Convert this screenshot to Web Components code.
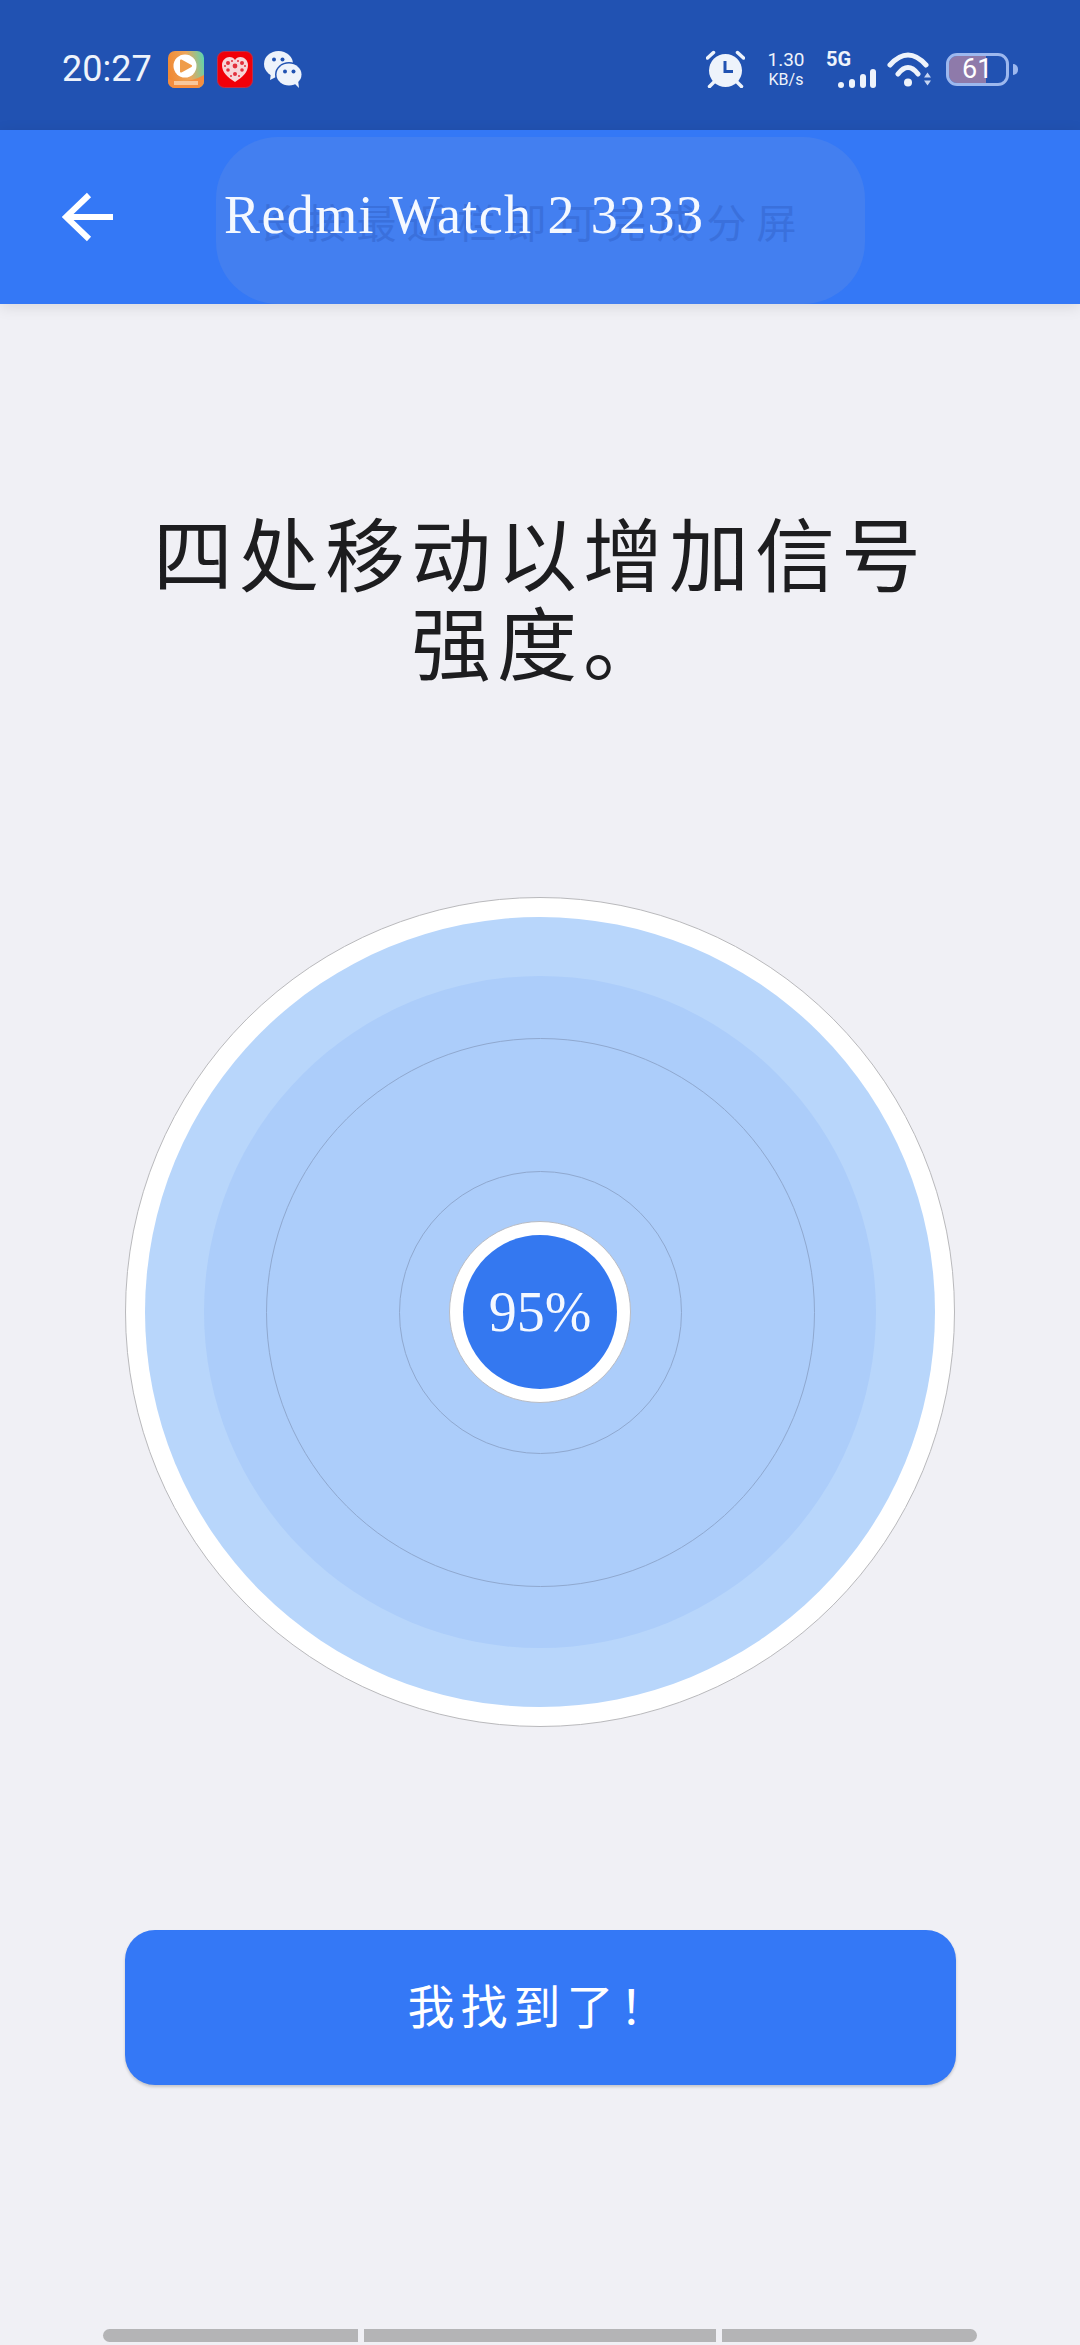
<!DOCTYPE html>
<html lang="zh">
<head>
<meta charset="utf-8">
<title>Redmi Watch 2 3233</title>
<style>
  html, body { margin: 0; height: 100%; }
  body {
    background: #f0f0f5;
    font-family: "Liberation Serif", "Noto Sans CJK SC", serif;
    display: flex;
    flex-direction: column;
    height: 2345px;
    overflow: hidden;
  }
</style>
</head>
<body>
  <status-bar></status-bar>
  <app-bar hint="长按最近栏即可完成分屏">Redmi Watch 2 3233</app-bar>
  <find-prompt>四处移动以增加信号强度。</find-prompt>
  <signal-radar value="95%"></signal-radar>
  <action-button>我找到了！</action-button>
  <nav-hint></nav-hint>

<script>
const html = (strings) => {
  const template = document.createElement('template');
  template.innerHTML = strings.join('');
  return template;
};

const statusBarTemplate = html`
<style>
  :host {
    display: flex;
    justify-content: space-between;
    align-items: center;
    box-sizing: border-box;
    height: 130px;
    padding: 8px 62px 0 62px;
    background: #2152b2;
    color: #eef3fb;
    font-family: Roboto, sans-serif;
  }
  .group { display: flex; align-items: center; }
  svg { display: block; }
  .time { font-size: 36px; width: 88px; line-height: 38px; white-space: nowrap; margin-right: 18px; }
  .app-a { margin-right: 13px; }
  .app-b { margin-right: 11px; }
  .alarm { margin-right: 22px; }
  .speed { width: 38px; margin-right: 21px; text-align: center; }
  .speed .rate { font-size: 19px; line-height: 22px; }
  .speed .unit { font-size: 16px; line-height: 18px; }
  .net { width: 50px; margin-right: 11px; }
  .net b { display: block; font-size: 20px; line-height: 19px; }
  .wifi { margin-right: 15px; }
  .battery { display: flex; align-items: center; gap: 4px; }
  .cell {
    box-sizing: border-box;
    width: 63px;
    height: 33px;
    border: 3px solid #9db8ee;
    border-radius: 11px;
    background: linear-gradient(90deg, #8e7aaa 65%, transparent 65%);
    background-clip: padding-box;
    font-size: 27px;
    line-height: 27px;
    padding-left: 13px;
    color: #fff;
  }
  .nub { width: 5px; height: 11px; background: #9db8ee; border-radius: 0 5px 5px 0; }
</style>
<div class="group">
  <span class="time">20:27</span>
  <svg class="app-a" width="36" height="37" viewBox="0 0 36 37">
    <defs>
      <linearGradient id="videoBg" x1="0" y1="0.4" x2="1" y2="0.2">
        <stop offset="0" stop-color="#f08a35"/>
        <stop offset="0.55" stop-color="#eda65a"/>
        <stop offset="1" stop-color="#5ed3ae"/>
      </linearGradient>
    </defs>
    <rect width="36" height="37" rx="7" fill="url(#videoBg)"/>
    <path d="M0 28Q18 34 36 24V30a7 7 0 0 1-7 7H7a7 7 0 0 1-7-7Z" fill="#f58d3f"/>
    <rect x="6" y="30" width="24" height="4" fill="#f9c79b"/>
    <circle cx="17" cy="15" r="11.5" fill="#fff"/>
    <path d="M13 9.5 23 15 13 20.5Z" fill="#ef9d4b" stroke="#ef9d4b" stroke-width="2" stroke-linejoin="round"/>
  </svg>
  <svg class="app-b" width="36" height="37" viewBox="0 0 36 37">
    <rect x="0.5" y="0.5" width="35" height="36" rx="7" fill="#f10009" stroke="#b8324f"/>
    <path d="M18 31C10 26 5 21 5 14C5 9 9 6 12.500 6C15 6 17 7 18 9C19 7 21 6 23.500 6C27 6 31 9 31 14C31 21 26 26 18 31Z" fill="#f7d6d8"/>
    <g fill="#e2303c">
      <circle cx="11" cy="12" r="2"/><circle cx="18" cy="15" r="2.400"/><circle cx="25" cy="12" r="2"/>
      <circle cx="11" cy="19" r="1.800"/><circle cx="25" cy="19" r="1.800"/><circle cx="18" cy="23" r="2"/>
      <circle cx="14" cy="25" r="1"/><circle cx="22" cy="25" r="1"/><circle cx="15" cy="10" r="1"/><circle cx="21" cy="10" r="1"/>
      <circle cx="8" cy="15" r="1"/><circle cx="28" cy="15" r="1"/>
    </g>
  </svg>
  <svg width="38" height="38" viewBox="0 0 38 38">
    <ellipse cx="14.500" cy="14" rx="14.500" ry="13" fill="#eef3fb"/>
    <path d="M7 23 6 30 14 26Z" fill="#eef3fb"/>
    <ellipse cx="25" cy="24.500" rx="14" ry="12.500" fill="#2152b2"/>
    <ellipse cx="25" cy="24.500" rx="12.500" ry="11" fill="#eef3fb"/>
    <path d="M30 33 35 38 34 30Z" fill="#eef3fb"/>
    <circle cx="10" cy="9.500" r="2" fill="#2152b2"/><circle cx="18.500" cy="9.500" r="2" fill="#2152b2"/>
    <circle cx="21" cy="21.500" r="2" fill="#2152b2"/><circle cx="29.500" cy="21.500" r="2" fill="#2152b2"/>
  </svg>
</div>
<div class="group">
  <svg class="alarm" width="39" height="38" viewBox="0 0 39 38">
    <circle cx="19.500" cy="20.500" r="16.500" fill="#eef3fb"/>
    <path d="M19 11V21.500H27" fill="none" stroke="#2152b2" stroke-width="3"/>
    <path d="M1.500 8 7.500 2.500M37.500 8 31.500 2.500M8 32 3.500 36.500M31 32 35.500 36.500" fill="none" stroke="#eef3fb" stroke-width="3.500" stroke-linecap="round"/>
  </svg>
  <div class="speed"><div class="rate">1.30</div><div class="unit">KB/s</div></div>
  <div class="net">
    <b>5G</b>
    <svg width="50" height="19" viewBox="0 0 50 19">
      <rect x="12" y="13" width="6" height="6" rx="3" fill="#eef3fb"/>
      <rect x="23" y="10" width="6" height="9" rx="3" fill="#eef3fb"/>
      <rect x="34" y="5" width="6" height="14" rx="3" fill="#eef3fb"/>
      <rect x="44" y="0" width="6" height="19" rx="3" fill="#eef3fb"/>
    </svg>
  </div>
  <svg class="wifi" width="44" height="35" viewBox="0 0 44 35">
    <path d="M3 13Q21 -7 39 13M11 22Q21 9 31 22" fill="none" stroke="#eef3fb" stroke-width="5" stroke-linecap="round"/>
    <circle cx="21" cy="30.500" r="4" fill="#eef3fb"/>
    <path d="M37 25.500 40.500 20.500 44 25.500ZM37 28.500 40.500 33.500 44 28.500Z" fill="#c6d5f2"/>
  </svg>
  <div class="battery"><div class="cell">61</div><div class="nub"></div></div>
</div>
`;

class StatusBar extends HTMLElement {
  constructor() {
    super();
    this.attachShadow({mode: 'open'});
    this.shadowRoot.appendChild(statusBarTemplate.content.cloneNode(true));
  }
}

const appBarTemplate = html`
<style>
  :host {
    display: flex;
    align-items: center;
    position: relative;
    z-index: 1;
    box-sizing: border-box;
    height: 174px;
    padding: 0 0 0 62px;
    background: #3478f6;
    color: #fff;
    box-shadow: 0 3px 14px rgba(0, 0, 0, .1);
  }
  svg { display: block; flex: none; }
  .title {
    position: relative;
    margin: 0 0 4px 110px;
    font-size: 54px;
    letter-spacing: 1.4px;
    white-space: nowrap;
    color: #f4f8ff;
  }
  .pill {
    position: absolute;
    left: 216px;
    right: 215px;
    top: 7px;
    bottom: 0;
    display: flex;
    align-items: center;
    justify-content: center;
    padding-right: 18px;
    border-radius: 62px;
    background: #437ff0;
    color: #3a70dc;
    font-family: "Noto Sans CJK SC", sans-serif;
    font-size: 40px;
    letter-spacing: 10px;
    white-space: nowrap;
  }
</style>
<div class="pill"></div>
<svg width="52" height="50" viewBox="0 0 52 50">
  <path d="M51 25H5M27 3 4 25 27 47" fill="none" stroke="#fff" stroke-width="6"/>
</svg>
<span class="title"><slot></slot></span>
`;

class AppBar extends HTMLElement {
  constructor() {
    super();
    this.attachShadow({mode: 'open'});
    this.shadowRoot.appendChild(appBarTemplate.content.cloneNode(true));
  }

  connectedCallback() {
    this.shadowRoot.querySelector('.pill').textContent = this.getAttribute('hint');
  }
}

const promptTemplate = html`
<style>
  :host {
    display: block;
    box-sizing: border-box;
    width: 800px;
    margin: 202px auto 0 auto;
    height: 182px;
    text-align: center;
    color: #1d1d1f;
    font-family: "Noto Sans CJK SC", sans-serif;
    font-size: 80px;
    line-height: 89px;
    letter-spacing: 6px;
  }
</style>
<slot></slot>
`;

class FindPrompt extends HTMLElement {
  constructor() {
    super();
    this.attachShadow({mode: 'open'});
    this.shadowRoot.appendChild(promptTemplate.content.cloneNode(true));
  }
}

const radarTemplate = html`
<style>
  :host {
    display: grid;
    place-items: center;
    box-sizing: border-box;
    width: 830px;
    height: 830px;
    margin: 209px auto 0 auto;
    border: 1.5px solid #b9b9bc;
    border-radius: 50%;
    background: #fff;
  }
  div { display: grid; place-items: center; box-sizing: border-box; border-radius: 50%; }
  .wave-outer { width: 790px; height: 790px; background: #b8d6fb; }
  .wave-inner { width: 672px; height: 672px; background: #accdfa; }
  .ring-far { width: 549px; height: 549px; border: 1.5px solid #8fa8cf; }
  .ring-near { width: 283px; height: 283px; border: 1.5px solid #8fa8cf; }
  .dial { width: 182px; height: 182px; background: #fff; border: 1.5px solid #b9bcc4; }
  .value {
    width: 154px;
    height: 154px;
    background: #3478f0;
    color: #f4f8ff;
    font-size: 56px;
  }
</style>
<div class="wave-outer">
  <div class="wave-inner">
    <div class="ring-far">
      <div class="ring-near">
        <div class="dial"><div class="value"></div></div>
      </div>
    </div>
  </div>
</div>
`;

class SignalRadar extends HTMLElement {
  constructor() {
    super();
    this.attachShadow({mode: 'open'});
    this.shadowRoot.appendChild(radarTemplate.content.cloneNode(true));
  }

  connectedCallback() {
    this.shadowRoot.querySelector('.value').textContent = this.getAttribute('value');
  }
}

const buttonTemplate = html`
<style>
  :host {
    display: flex;
    align-items: center;
    justify-content: center;
    box-sizing: border-box;
    width: 831px;
    height: 155px;
    margin: 203px auto 0 auto;
    padding-bottom: 8px;
    border-radius: 30px;
    background: #3478f6;
    color: #fff;
    font-family: "Noto Sans CJK SC", sans-serif;
    font-size: 47px;
    letter-spacing: 6px;
    box-shadow: 0 2px 3px rgba(0, 0, 0, .18);
  }
</style>
<slot></slot>
`;

class ActionButton extends HTMLElement {
  constructor() {
    super();
    this.attachShadow({mode: 'open'});
    this.shadowRoot.appendChild(buttonTemplate.content.cloneNode(true));
  }
}

const navHintTemplate = html`
<style>
  :host {
    display: flex;
    gap: 6px;
    box-sizing: border-box;
    height: 13px;
    margin: 244px 103px 0 103px;
  }
  div { background: #b4b4b6; }
  .start { width: 255px; border-radius: 7px 0 0 7px; }
  .middle { flex: 1; }
  .end { width: 255px; border-radius: 0 7px 7px 0; }
</style>
<div class="start"></div><div class="middle"></div><div class="end"></div>
`;

class NavHint extends HTMLElement {
  constructor() {
    super();
    this.attachShadow({mode: 'open'});
    this.shadowRoot.appendChild(navHintTemplate.content.cloneNode(true));
  }
}

customElements.define('status-bar', StatusBar);
customElements.define('app-bar', AppBar);
customElements.define('find-prompt', FindPrompt);
customElements.define('signal-radar', SignalRadar);
customElements.define('action-button', ActionButton);
customElements.define('nav-hint', NavHint);
</script>
</body>
</html>
